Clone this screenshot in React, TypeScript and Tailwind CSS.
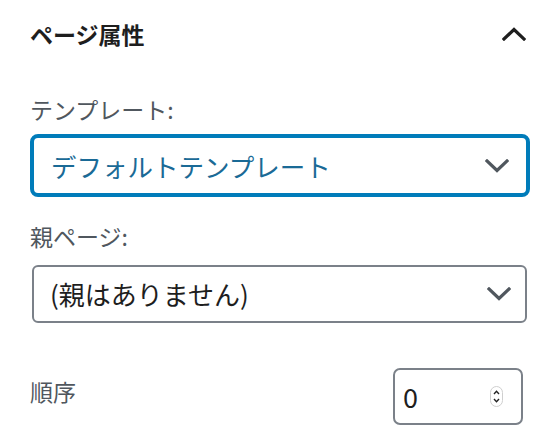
import React from "react";

function Chevron({ up = false, color, className }: { up?: boolean; color: string; className?: string }) {
  return (
    <svg width="24" height="14" viewBox="0 0 24 14" className={className} fill="none">
      <polyline
        points={up ? "2,12 12,2.5 22,12" : "2,2 12,11.5 22,2"}
        stroke={color}
        strokeWidth="3.2"
        strokeLinecap="square"
        strokeLinejoin="miter"
      />
    </svg>
  );
}

export default function App() {
  return (
    <div className="w-[550px] h-[440px] bg-white px-[30px] font-['Noto_Sans_CJK_JP','Noto_Sans',sans-serif] overflow-hidden">
      <div className="pt-[16px] h-[52px] flex items-center justify-between">
        <h2 className="text-[23px] leading-[36px] font-bold text-[#1e1e1e]">ページ属性</h2>
        <Chevron up color="#1e1e1e" className="mr-[-6px]" />
      </div>

      <div className="mt-[42px] text-[23px] leading-[30px] text-[#50575e]">テンプレート:</div>

      <div className="mt-[10px] w-[500px] h-[63px] border-[4px] border-[#007cba] rounded-[8px] flex items-center justify-between pl-[17px] pr-[17px]">
        <span className="text-[25.5px] leading-none text-[#1a6a96]">デフォルトテンプレート</span>
        <Chevron color="#50575e" />
      </div>

      <div className="mt-[24px] text-[23px] leading-[30px] text-[#50575e]">親ページ:</div>

      <div className="mt-[14px] ml-[2px] w-[495px] h-[58px] border-[2px] border-[#7b8189] rounded-[6px] flex items-center justify-between pl-[16px] pr-[14px]">
        <span className="text-[26px] leading-none text-[#1e1e1e]">(親はありません)</span>
        <Chevron color="#50575e" />
      </div>

      <div className="mt-[45px] flex items-start justify-between">
        <div className="mt-[8px] text-[23px] leading-[30px] text-[#50575e]">順序</div>
        <div className="mr-[-3px] w-[130px] h-[57px] border-[2px] border-[#7b8189] rounded-[7px] flex items-center justify-between pl-[8px] pr-[18px]">
          <span className="text-[27px] leading-none text-[#1e1e1e]">0</span>
          <div className="w-[13px] h-[21px] border border-[#cfcfcf] rounded-full flex flex-col items-center justify-center gap-[3px]">
            <svg width="7" height="5" viewBox="0 0 7 5" fill="none">
              <polyline points="1,4 3.5,1.3 6,4" stroke="#222" strokeWidth="1.4" />
            </svg>
            <svg width="7" height="5" viewBox="0 0 7 5" fill="none">
              <polyline points="1,1 3.5,3.7 6,1" stroke="#222" strokeWidth="1.4" />
            </svg>
          </div>
        </div>
      </div>
    </div>
  );
}
